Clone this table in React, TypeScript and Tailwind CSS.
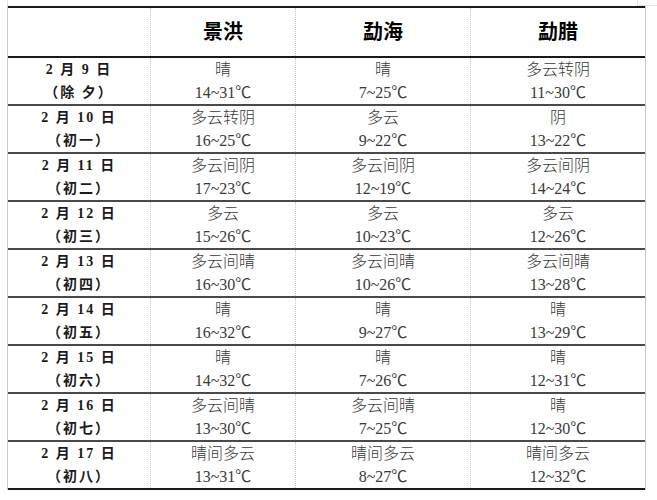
import React from "react";

type Cell = [string, string];
type Row = { d: string; l: string; c: Cell[] };

const rows: Row[] = [
  { d: "2 月 9 日", l: "（除 夕）", c: [["晴", "14~31℃"], ["晴", "7~25℃"], ["多云转阴", "11~30℃"]] },
  { d: "2 月 10 日", l: "（初一）", c: [["多云转阴", "16~25℃"], ["多云", "9~22℃"], ["阴", "13~22℃"]] },
  { d: "2 月 11 日", l: "（初二）", c: [["多云间阴", "17~23℃"], ["多云间阴", "12~19℃"], ["多云间阴", "14~24℃"]] },
  { d: "2 月 12 日", l: "（初三）", c: [["多云", "15~26℃"], ["多云", "10~23℃"], ["多云", "12~26℃"]] },
  { d: "2 月 13 日", l: "（初四）", c: [["多云间晴", "16~30℃"], ["多云间晴", "10~26℃"], ["多云间晴", "13~28℃"]] },
  { d: "2 月 14 日", l: "（初五）", c: [["晴", "16~32℃"], ["晴", "9~27℃"], ["晴", "13~29℃"]] },
  { d: "2 月 15 日", l: "（初六）", c: [["晴", "14~32℃"], ["晴", "7~26℃"], ["晴", "12~31℃"]] },
  { d: "2 月 16 日", l: "（初七）", c: [["多云间晴", "13~30℃"], ["多云间晴", "7~25℃"], ["晴", "12~30℃"]] },
  { d: "2 月 17 日", l: "（初八）", c: [["晴间多云", "13~31℃"], ["晴间多云", "8~27℃"], ["晴间多云", "12~32℃"]] },
];

const font = { fontFamily: '"Liberation Serif", "Noto Sans CJK SC", serif' };

export default function App() {
  return (
    <div className="w-[657px] h-[500px] bg-white relative" style={font}>
      <div className="absolute left-[7px] top-0 h-[6px] w-px bg-[#e4e4e4]" />
      <div className="absolute left-[637px] top-0 h-[6px] w-px bg-[#e4e4e4]" />
      <div className="absolute left-[637px] top-[5px] h-px w-[20px] bg-[#e4e4e4]" />
      <div className="pt-[6px] pl-[7px]">
        <div className="w-[639px] border-x border-[#c8c8c8]">
          <div className="grid grid-cols-[142px_145px_175px_175px] h-[52px] border-y-2 border-[#1a1a1a] text-[20px] font-bold text-black">
            <div />
            {["景洪", "勐海", "勐腊"].map((h) => (
              <div key={h} className="flex items-center justify-center border-l border-dotted border-[#c8c8c8]">
                {h}
              </div>
            ))}
          </div>
          {rows.map((r, i) => (
            <div
              key={r.d}
              className={
                i === rows.length - 1
                  ? "grid grid-cols-[142px_145px_175px_175px] h-[48px] border-b-2 border-[#1a1a1a]"
                  : "grid grid-cols-[142px_145px_175px_175px] h-[48px] border-b-2 border-[#4a4a4a]"
              }
            >
              <div className="flex flex-col items-center justify-center leading-[23px] text-[14px] font-bold text-[#1a1a1a] tracking-[2px]">
                <span>{r.d}</span>
                <span>{r.l}</span>
              </div>
              {r.c.map((c, j) => (
                <div
                  key={j}
                  className="flex flex-col items-center justify-center leading-[23px] text-[16px] text-[#3a3a3a] border-l border-dotted border-[#c8c8c8]"
                >
                  <span className="font-light">{c[0]}</span>
                  <span>{c[1]}</span>
                </div>
              ))}
            </div>
          ))}
        </div>
      </div>
    </div>
  );
}
